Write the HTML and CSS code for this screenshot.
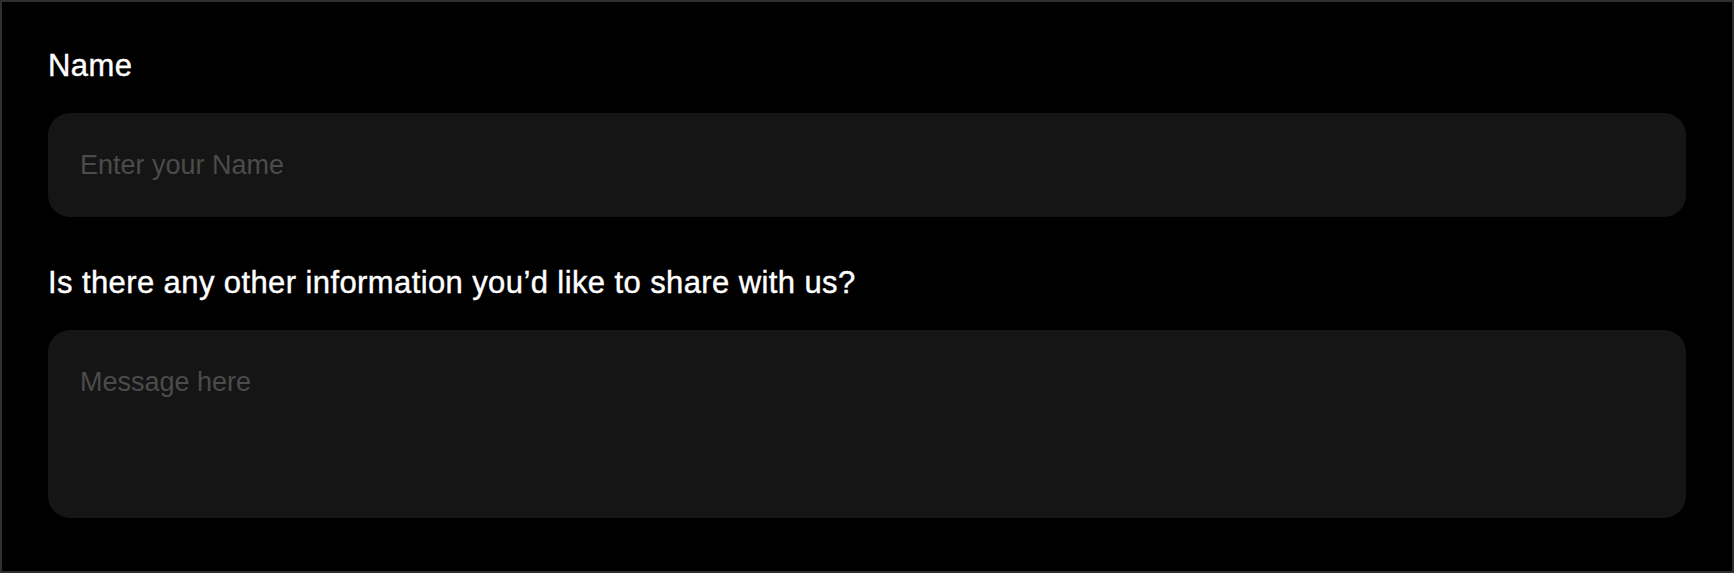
FILE: index.html
```html
<!DOCTYPE html>
<html lang="en">
<head>
    <meta charset="UTF-8">
    <title>Contact form</title>
    <link rel="stylesheet" href="styles.css">
</head>
<body>
<form class="form">
    <div class="field">
        <label class="label" for="name">Name</label>
        <input class="input" id="name" type="text" placeholder="Enter your Name">
    </div>
    <div class="field">
        <label class="label" for="message">Is there any other information you’d like to share with us?</label>
        <textarea class="input textarea" id="message" placeholder="Message here"></textarea>
    </div>
</form>
</body>
</html>
```

FILE: styles.css
```css
html,body{
    margin: 0;
    padding: 0;
    height: 100%;
}
body{
    background: #000;
    font-family: "Liberation Sans", Arial, sans-serif;
    box-sizing: border-box;
    border: 2px solid #2f2f2f;
}
.form{
    display: flex;
    flex-direction: column;
    gap: 48px;
    padding: 46px 46px 0 46px;
}
.field{
    display: flex;
    flex-direction: column;
    gap: 29px;
}
.label{
    color: #fff;
    font-size: 31px;
    line-height: 36px;
    letter-spacing: 0.4px;
    -webkit-text-stroke: 0.4px #fff;
}
.input{
    box-sizing: border-box;
    width: 100%;
    height: 104px;
    margin: 0;
    padding: 32px 32px;
    border: none;
    outline: none;
    border-radius: 22px;
    background: #151515;
    color: #fff;
    font-family: "Liberation Sans", Arial, sans-serif;
    font-size: 27px;
    line-height: 40px;
}
.input::placeholder{
    color: #4b4b4b;
}
.textarea{
    height: 188px;
    resize: none;
    display: block;
}
```
